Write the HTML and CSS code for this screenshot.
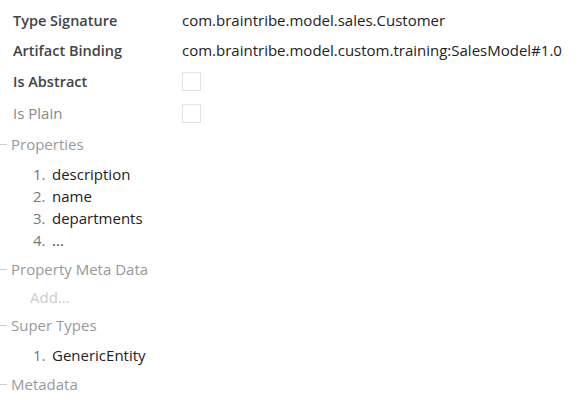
FILE: index.html
```html
<!DOCTYPE html>
<html>
<head>
<meta charset="utf-8">
<link rel="stylesheet" href="styles.css">
</head>
<body>
<div class="panel">
  <div class="row"><div class="label">Type Signature</div><div class="value">com.braintribe.model.sales.Customer</div></div>
  <div class="row"><div class="label">Artifact Binding</div><div class="value">com.braintribe.model.custom.training:SalesModel#1.0</div></div>
  <div class="row check"><div class="label">Is Abstract</div><div class="value"><span class="box"></span></div></div>
  <div class="row check"><div class="label dim">Is Plain</div><div class="value"><span class="box"></span></div></div>

  <div class="section">
    <div class="head"><span class="dash"></span>Properties</div>
    <ol class="list">
      <li><span class="num">1.</span>description</li>
      <li><span class="num">2.</span>name</li>
      <li><span class="num">3.</span>departments</li>
      <li><span class="num">4.</span><span class="more">...</span></li>
    </ol>
  </div>
  <div class="section">
    <div class="head"><span class="dash"></span>Property Meta Data</div>
    <div class="add">Add...</div>
  </div>
  <div class="section">
    <div class="head"><span class="dash"></span>Super Types</div>
    <ol class="list">
      <li><span class="num">1.</span>GenericEntity</li>
    </ol>
  </div>
  <div class="section">
    <div class="head"><span class="dash"></span>Metadata</div>
  </div>
</div>
</body>
</html>
```
FILE: styles.css
```css
html, body { margin: 0; padding: 0; background: #fff; }
body { font-family: "Open Sans", "Liberation Sans", sans-serif; font-size: 15px; color: #222; }
.panel { padding: 5px 0 0 0; }
.row { display: flex; align-items: center; height: 30px; }
.row.check { height: 32px; }
.label { width: 169px; padding-left: 13px; box-sizing: content-box; font-weight: 600; color: #444; font-size: 14.5px; }
.label.dim { font-weight: 400; color: #888; font-size: 15px; }
.value { color: #222; font-size: 15px; }
.box { display: block; width: 17px; height: 17px; border: 1.5px solid #e2e2e2; }
.head { display: flex; align-items: center; height: 30px; color: #999; font-size: 15px; }
.dash { display: inline-block; width: 7px; height: 1px; background: #ccc; margin-right: 4px; }
.list { list-style: none; margin: 4px 0 3px 0; padding: 0 0 0 33px; font-size: 15px; }
.list li { height: 22px; line-height: 22px; display: flex; }
.num { width: 19px; color: #777; }
.more { color: #444; }
.add { padding-left: 30px; color: #ccc; height: 26px; line-height: 26px; }
```
